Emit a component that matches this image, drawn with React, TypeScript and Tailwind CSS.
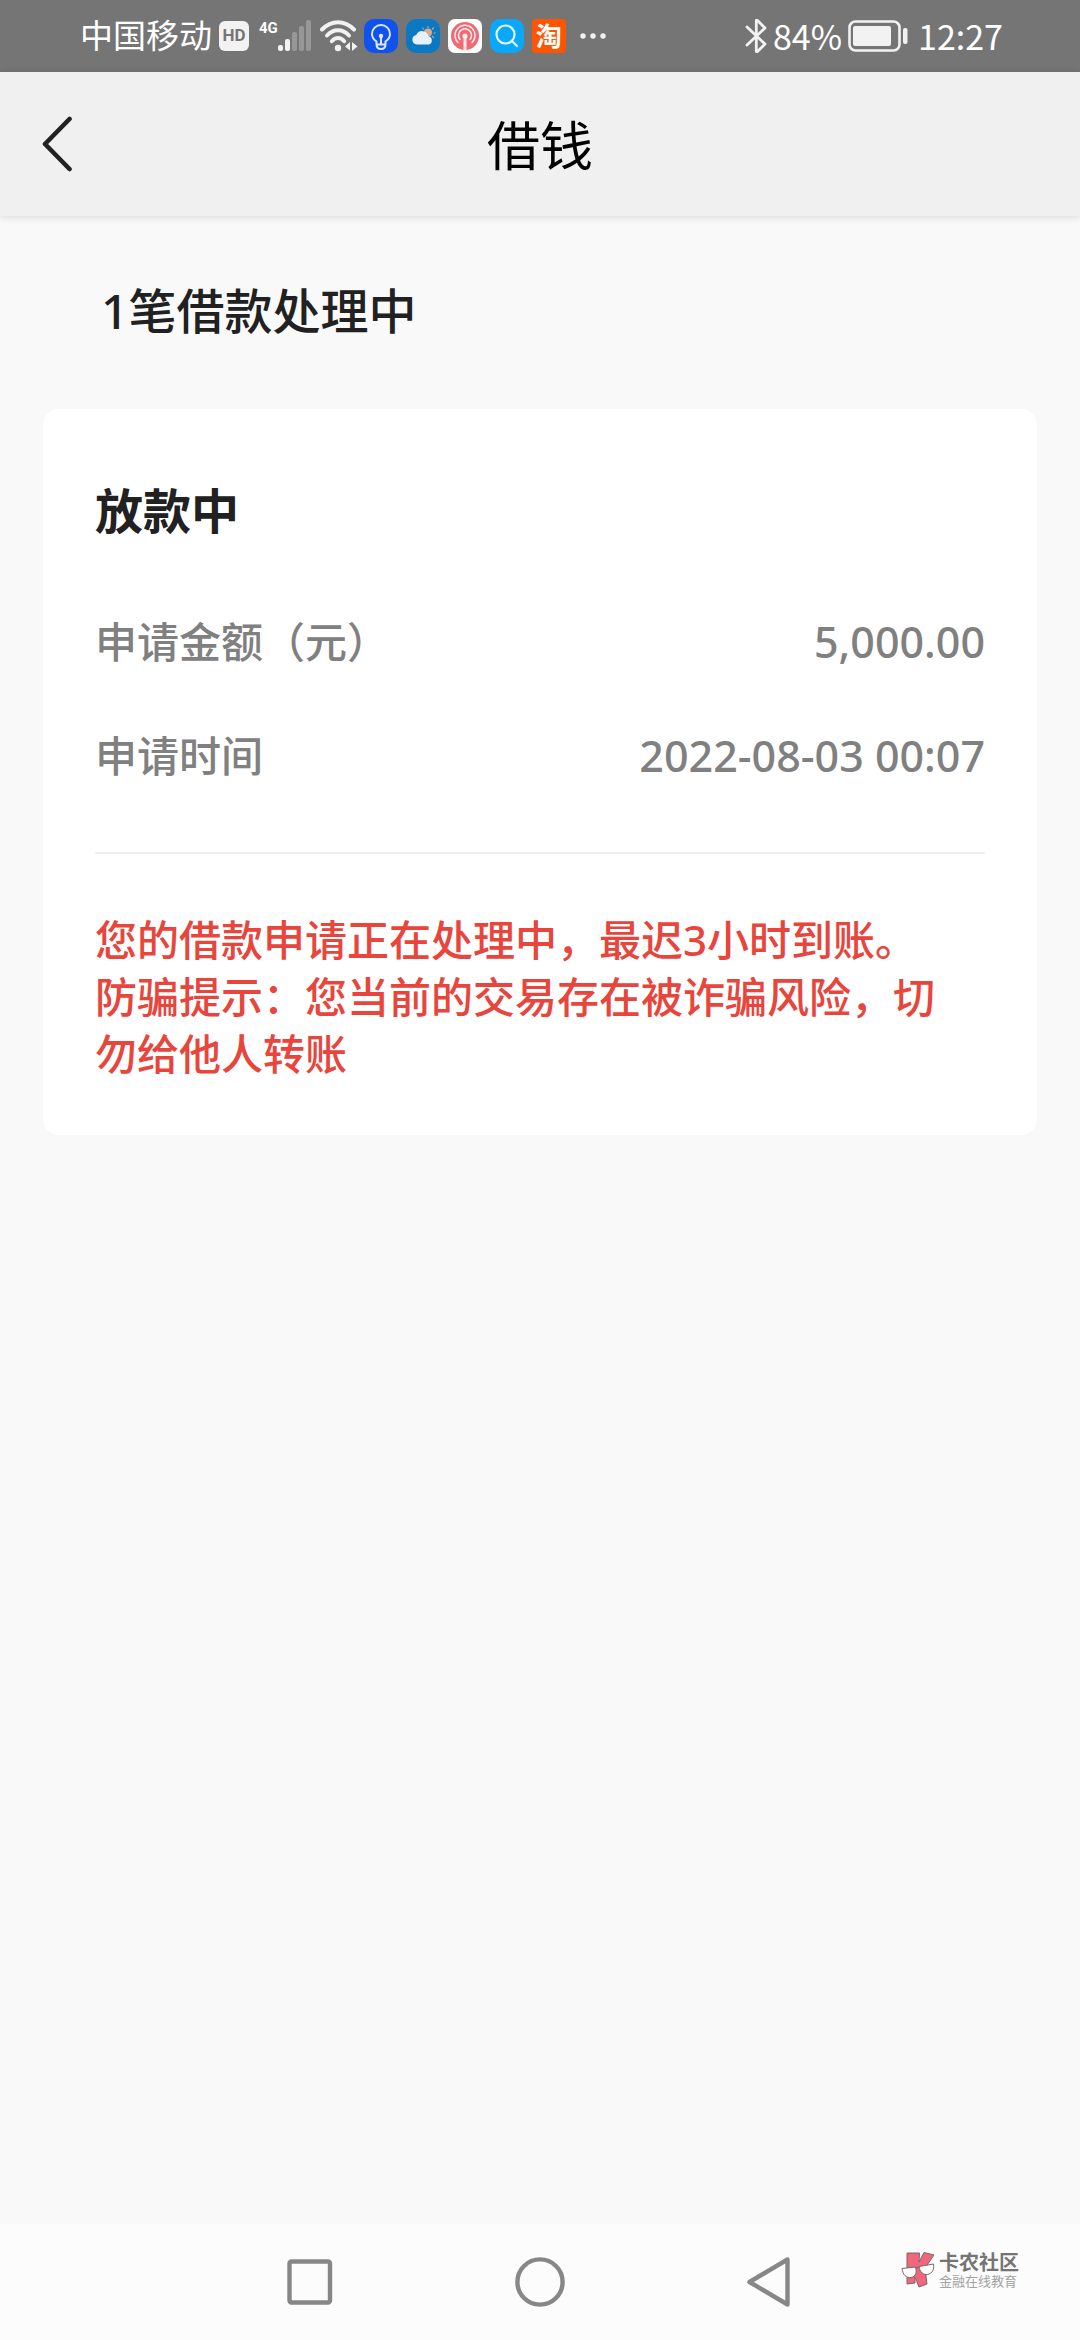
import type { ReactNode } from 'react';

interface DetailRow {
  label: string;
  value: string;
}

const loan = {
  status: '放款中',
  rows: [
    { label: '申请金额（元）', value: '5,000.00' },
    { label: '申请时间', value: '2022-08-03 00:07' },
  ] as DetailRow[],
  notices: [
    '您的借款申请正在处理中，最迟3小时到账。',
    '防骗提示：您当前的交易存在被诈骗风险，切勿给他人转账',
  ],
};

function SignalIcon() {
  return (
    <svg className="h-8 w-[34px]" viewBox="0 0 34 32" fill="#f2f2f2">
      <rect x="0" y="25" width="5" height="6" rx="2" />
      <rect x="7" y="19" width="5" height="12" rx="2" />
      <g fill="#979797">
        <rect x="14" y="12" width="5" height="19" rx="2" />
        <rect x="21" y="6" width="5" height="25" rx="2" />
        <rect x="28" y="0" width="5" height="31" rx="2" />
      </g>
    </svg>
  );
}

function WifiIcon() {
  return (
    <svg className="h-8 w-[38px]" viewBox="0 0 38 32" fill="none" stroke="#f2f2f2" strokeWidth="4" strokeLinecap="round">
      <path d="M2 9.500C11.500 -.2 24.500 -.2 34 9.500" />
      <path d="M7 15.500C13.500 8.600 22.500 8.600 29 15.500" />
      <path d="M11.800 21.200C15.500 17 20.500 17 24.200 21.200" />
      <circle cx="18" cy="28" r="3.200" fill="#f2f2f2" stroke="none" />
      <path d="M30 22v8.500l-5-4zM32 22l5.500 4.500L32 31z" fill="#f2f2f2" stroke="none" />
    </svg>
  );
}

// Coloured square that holds one notification glyph
function AppIcon({ className, children }: { className: string; children: ReactNode }) {
  return (
    <span className={`flex h-[34px] w-[34px] items-center justify-center overflow-hidden ${className}`}>
      {children}
    </span>
  );
}

function BulbIcon() {
  return (
    <svg className="h-full w-full" viewBox="0 0 34 34" fill="none" stroke="#dbe6ff" strokeWidth="2" strokeLinejoin="round">
      <path d="M12.500 25v-2.500C9.500 20.500 8 18 8 15a9 9 0 0 1 18 0c0 3-1.500 5.500-4.500 7.500V25c0 3-1.500 5-4.500 5s-4.500-2-4.500-5z" />
      <path d="M12.500 25.500h9M17 18v7" />
      <circle cx="17" cy="17" r="2.200" fill="#dbe6ff" stroke="none" />
    </svg>
  );
}

function WeatherIcon() {
  return (
    <svg className="h-full w-full" viewBox="0 0 34 34">
      <g stroke="#c9a98a" strokeWidth="1.200" strokeLinecap="round">
        <path d="M22 8.500v-1M26.500 10l1-1.200M28 14h1.200M17.500 10l-.8-1M26.500 17.500l1 1" />
      </g>
      <circle cx="22" cy="13.500" r="4" fill="#d9ad85" />
      <path
        d="M11 25.500a4.800 4.800 0 0 1-.8-9.500 6.500 6.500 0 0 1 12.300 1.200 4.300 4.300 0 0 1 .3 8.300z"
        fill="#e6f1fb"
      />
    </svg>
  );
}

function RadioIcon() {
  return (
    <svg className="h-full w-full" viewBox="0 0 34 34" fill="none" stroke="#fbe9ea" strokeWidth="1.500" strokeLinecap="round">
      <circle cx="17" cy="17" r="14" fill="#ee6b74" stroke="none" />
      <path d="M10 23.500a10 10 0 1 1 14 0" />
      <path d="M12 20.500a6.500 6.500 0 1 1 10 0" />
      <circle cx="17" cy="17" r="2.600" fill="#fbe9ea" stroke="none" />
      <path d="M17 18v13" strokeWidth="3" />
    </svg>
  );
}

function SearchIcon() {
  return (
    <svg className="h-full w-full" viewBox="0 0 34 34" fill="none" stroke="#e4f6ff" strokeWidth="2.200" strokeLinecap="round">
      <circle cx="15.500" cy="15.500" r="9" />
      <path d="M22 22l5 5" />
    </svg>
  );
}

function MoreIcon() {
  return (
    <svg className="h-[6px] w-[26px]" viewBox="0 0 26 6" fill="#f2f2f2">
      <circle cx="3" cy="3" r="2.700" />
      <circle cx="13" cy="3" r="2.700" />
      <circle cx="23" cy="3" r="2.700" />
    </svg>
  );
}

function BluetoothIcon() {
  return (
    <svg
      className="h-[34px] w-[22px]"
      viewBox="0 0 22 34"
      fill="none"
      stroke="#f2f2f2"
      strokeWidth="2.800"
      strokeLinecap="round"
      strokeLinejoin="round"
    >
      <path d="M2 8l18 17-7.500 7.500h-1.200V1.500h1.200L20 9 2 26" />
    </svg>
  );
}

function BatteryIcon() {
  return (
    <svg className="h-8 w-[60px]" viewBox="0 0 60 32" fill="#f2f2f2">
      <rect x="1.500" y="1.500" width="50" height="29" rx="6" fill="none" stroke="#f2f2f2" strokeWidth="2.600" />
      <rect x="5" y="6" width="38" height="20" rx="2" />
      <rect x="55" y="8" width="4.500" height="16" rx="2" />
    </svg>
  );
}

function StatusBar() {
  return (
    <div className="flex h-[72px] items-center justify-between bg-[#757575] pr-[77px] pl-20 text-white">
      <div className="flex items-center">
        <span className="text-[33px] leading-9">中国移动</span>
        <span className="ml-[7px] flex h-[30px] w-[30px] items-center justify-center rounded-md bg-[#f2f2f2] font-['Roboto',sans-serif] text-[17px] font-bold text-[#757575]">
          HD
        </span>
        <span className="ml-2.5 self-start font-['Roboto',sans-serif] text-[15px] leading-5 font-bold">4G</span>
        <SignalIcon />
        <span className="ml-2">
          <WifiIcon />
        </span>
        <div className="ml-1.5 flex gap-2">
          <AppIcon className="rounded-[10px] bg-[#0f52ee]">
            <BulbIcon />
          </AppIcon>
          <AppIcon className="rounded-[10px] bg-[#0b78c4]">
            <WeatherIcon />
          </AppIcon>
          <AppIcon className="rounded-[7px] bg-white">
            <RadioIcon />
          </AppIcon>
          <AppIcon className="rounded-[10px] bg-[#0aa8fb]">
            <SearchIcon />
          </AppIcon>
          <AppIcon className="rounded-sm bg-[#ff5500] text-[26px] leading-none font-bold">淘</AppIcon>
        </div>
        <span className="ml-3.5">
          <MoreIcon />
        </span>
      </div>
      <div className="flex items-center font-['Noto_Sans_CJK_SC',sans-serif]">
        <BluetoothIcon />
        <span className="ml-1.5 text-[34px] leading-9">84%</span>
        <span className="ml-1.5">
          <BatteryIcon />
        </span>
        <span className="ml-2.5 text-[34px] leading-9">12:27</span>
      </div>
    </div>
  );
}

function Header() {
  return (
    <header className="relative z-10 grid h-36 grid-cols-3 items-center bg-[#f0f0f0] shadow-[0_1px_8px_rgba(0,0,0,0.14)]">
      <button type="button" aria-label="返回" className="w-28 pl-[41px]">
        <svg
          className="h-14 w-8"
          viewBox="0 0 32 56"
          fill="none"
          stroke="#222222"
          strokeWidth="4.600"
          strokeLinecap="round"
          strokeLinejoin="round"
        >
          <path d="M28.500 3L4 28l24.500 25" />
        </svg>
      </button>
      <h1 className="pt-1 text-center text-[53px] leading-[64px] text-black">借钱</h1>
    </header>
  );
}

function LoanCard() {
  return (
    <section className="mx-[43px] mt-[66px] rounded-2xl bg-white px-[52px] pt-[70px] pb-[53px]">
      <h3 className="text-5xl leading-[64px] font-bold text-[#212121]">{loan.status}</h3>
      <dl className="mt-[70px] flex flex-col gap-[57px] font-medium text-[#808080]">
        {loan.rows.map(row => (
          <div key={row.label} className="flex items-center justify-between leading-[57px]">
            <dt className="text-[42px]">{row.label}</dt>
            <dd className="text-[43px]">{row.value}</dd>
          </div>
        ))}
      </dl>
      <div className="mt-[68px] border-t-2 border-[#eeeeee] pt-[57px] pr-8 text-[42px] leading-[57px] font-medium text-[#e8453c]">
        {loan.notices.map(notice => (
          <p key={notice}>{notice}</p>
        ))}
      </div>
    </section>
  );
}

function Watermark() {
  return (
    <div className="absolute top-7 right-[61px] flex items-center gap-1">
      <svg className="h-9 w-[34px]" viewBox="0 0 34 36" stroke="#77696b" strokeWidth="1" strokeLinejoin="round">
        <path d="M6 1h12.500l-.5 9 5-9.500L33 3l-9 13 2 16-8 3-4-10v6l-8 1V1z" fill="#f2667b" />
        <path d="M1 16.500L14.500 15c1.500 5 .5 9.500-4.500 10.500-5 .5-8-2.500-9-9zM18 14.500L32.500 12c1 6-1.500 9.500-6 10.500-4 .5-7.500-2-8.500-8z" fill="#ffffff" />
        <path d="M14.500 16l3.500-1" />
      </svg>
      <div className="flex flex-col">
        <span className="text-[20px] leading-[22px] font-bold text-[#757575]">卡农社区</span>
        <span className="text-[13px] leading-[14px] text-[#a3a3a3]">金融在线教育</span>
      </div>
    </div>
  );
}

function NavBar() {
  return (
    <nav className="relative h-[116px] bg-[#fcfcfc]">
      <div className="mx-auto grid h-full w-[64%] grid-cols-3">
        <button type="button" aria-label="最近任务" className="flex items-center justify-center">
          <svg className="h-[50px] w-[50px]" viewBox="0 0 50 50" fill="none" stroke="#878787" strokeWidth="4.400">
            <rect x="4.500" y="4.500" width="40.500" height="41" rx="2" />
          </svg>
        </button>
        <button type="button" aria-label="主屏幕" className="flex items-center justify-center">
          <svg className="h-[50px] w-[50px]" viewBox="0 0 50 50" fill="none" stroke="#878787" strokeWidth="4.400">
            <circle cx="25" cy="25" r="22.600" />
          </svg>
        </button>
        <button type="button" aria-label="返回上一页" className="flex items-center justify-center">
          <svg
            className="h-[50px] w-[50px]"
            viewBox="0 0 50 50"
            fill="none"
            stroke="#878787"
            strokeWidth="4.400"
            strokeLinejoin="round"
          >
            <path d="M42.500 2.500v45L4.500 25z" />
          </svg>
        </button>
      </div>
      <Watermark />
    </nav>
  );
}

export default function App() {
  return (
    <div
      lang="zh-CN"
      className="flex min-h-screen flex-col bg-[#f9f9f9] font-['Noto_Sans','Noto_Sans_CJK_SC',sans-serif]"
    >
      <StatusBar />
      <Header />
      <main className="flex-1 pt-[63px]">
        <h2 className="pl-[101px] text-5xl leading-[64px] font-medium text-[#212121]">1笔借款处理中</h2>
        <LoanCard />
      </main>
      <NavBar />
    </div>
  );
}
